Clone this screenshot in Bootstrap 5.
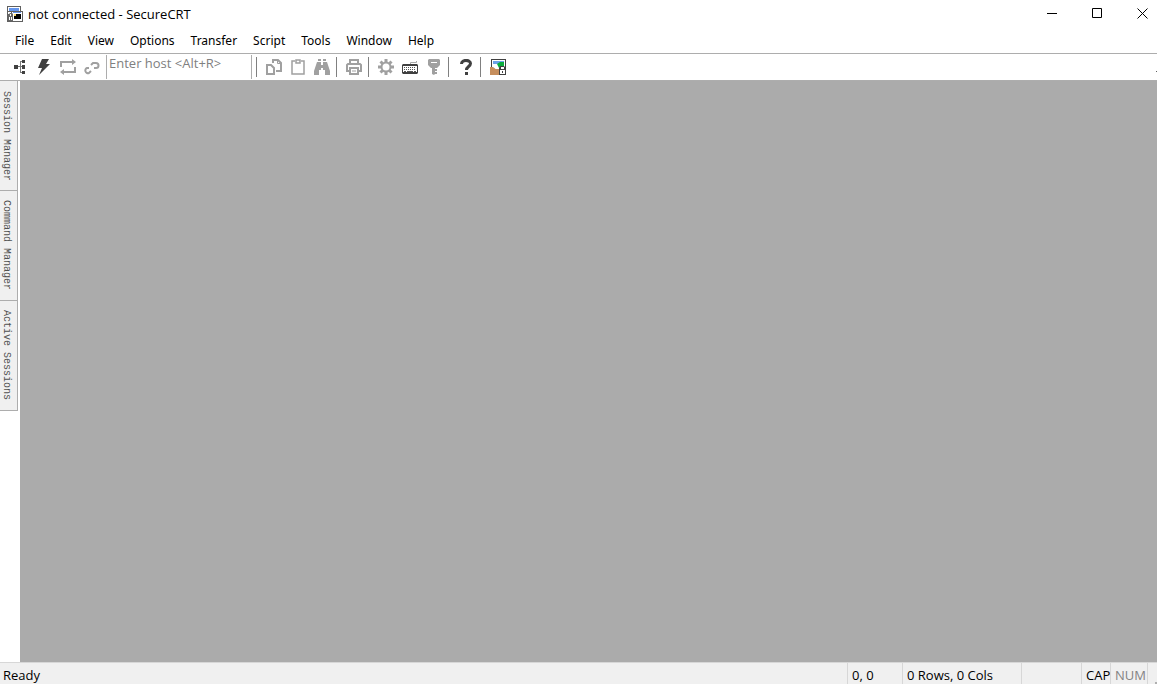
<!DOCTYPE html>
<html lang="en">
<head>
<meta charset="utf-8">
<meta name="viewport" content="width=device-width, initial-scale=1">
<title>not connected - SecureCRT</title>
<link href="https://cdn.jsdelivr.net/npm/bootstrap@5.3.0/dist/css/bootstrap.min.css" rel="stylesheet">
<style>
  body { font: 13px/20px "Open Sans", sans-serif; color: #000; background: #fff; }
  svg { display: block; }
  button { border: 0; background: transparent; color: inherit; padding: 0; }
  .titlebar { height: 27px; padding-left: 7px; gap: 5px; }
  .caption-group { margin-right: -8px; }
  .caption-btn { width: 45px; height: 27px; display: flex; align-items: center; justify-content: center; }
  .menubar { height: 27px; gap: 16px; padding: 2px 0 0 15px; border-bottom: 1px solid #adadad; font-family: "Noto Sans", sans-serif; font-size: 12px; }
  .menubar a { color: #000; text-decoration: none; }
  .toolbar { height: 27px; padding-left: 8px; border-bottom: 1px solid #adadad; }
  .tool { width: 24px; height: 26px; padding: 0 4px; color: #a0a0a0; }
  .tool.active-tool { color: #404040; }
  .divider { width: 8px; height: 20px; padding-left: 2px; }
  .divider::before { content: ""; display: block; width: 1px; height: 20px; background: #808080; }
  .host { width: 146px; height: 24px; margin: 0 2px; padding: 0 2px 8px; border: solid #adadad; border-width: 0 1px; border-radius: 0; line-height: 16px; outline: 0; }
  .host::placeholder { color: #808080; opacity: 1; }
  .toolbar-end { width: 1px; height: 1px; margin: 8px 0 0 auto; background: #606060; }
  .side { width: 20px; }
  .side-tab { width: 18px; height: 110px; padding: 0 5px 0 0; background: #f0f0f0; border: solid #adadad; border-width: 0 1px 1px 0; color: #505050; font: 10px/12px "Liberation Mono", monospace; writing-mode: vertical-rl; display: flex; align-items: center; justify-content: center; white-space: nowrap; }
  .side-tab:first-child { padding-top: 1px; }
  .workspace { background: #ababab; }
  .statusbar { height: 22px; background: #f0f0f0; border-top: 1px solid #d7d7d7; white-space: nowrap; }
  .ready { padding: 2px 0 0 3px; }
  .pane { height: 21px; padding: 2px 0 0 4px; border-left: 1px solid #d7d7d7; }
  .pane-pos { width: 55px; } .pane-size { width: 119px; } .pane-blank { width: 60px; } .pane-cap { width: 29px; } .pane-num { width: 37px; color: #838383; }
  .pane-grip { width: 10px; padding: 0; display: flex; align-items: flex-end; justify-content: flex-end; }
  .pane-grip::after { content: ""; width: 2px; height: 2px; background: #b0b0b0; }
</style>
</head>
<body class="vh-100 d-flex flex-column overflow-hidden">
<header>
  <div class="titlebar d-flex align-items-center">
    <svg width="16" height="18" viewBox="0 0 16 18" aria-hidden="true"><path fill="#606060" d="M0 1h14v5h2v11H5v0H0z"/><path fill="#fff" d="M1 2h12v4H1z"/><path fill="#6495ed" d="M2 3h10v3H2z"/><path fill="#fff" d="M5 7h10v9H5zM1 7h3v3H1z"/><path fill="#6495ed" d="M6 7h8v1H6z"/><path fill="#000" d="M7 9h7v5H7z"/><path fill="#f5d76e" d="M7 9h2v2H7z"/><path fill="#666" d="M1 9h1l1-1h2l1 1v7H1z"/><path fill="#fff" d="M3 9h1v2H3zM2 12h1v3H2zM4 12h1v3H4z"/></svg>
    <span class="flex-grow-1">not connected - SecureCRT</span>
    <div class="caption-group d-flex">
      <button class="caption-btn" aria-label="Minimize"><svg width="11" height="11"><path d="M0 5h10v1H0z"/></svg></button>
      <button class="caption-btn" aria-label="Maximize"><svg width="11" height="11"><path fill="none" stroke="#000" d="M.5.5h9v9h-9z"/></svg></button>
      <button class="caption-btn" aria-label="Close"><svg width="11" height="11"><path stroke="#000" d="m.5.5 10 10m0-10-10 10"/></svg></button>
    </div>
  </div>
  <nav class="menubar d-flex align-items-center" aria-label="Menu">
    <a href="#">File</a><a href="#">Edit</a><a href="#">View</a><a href="#">Options</a><a href="#">Transfer</a><a href="#">Script</a><a href="#">Tools</a><a href="#">Window</a><a href="#">Help</a>
  </nav>
  <div class="toolbar d-flex align-items-center" role="toolbar" aria-label="Main toolbar">
    <button class="tool active-tool" aria-label="Connect"><svg width="16" height="16" viewBox="0 0 16 16" fill="currentColor"><path d="M2 6h4v4H2zM10 1h3v3h-3zM10 6h3v4h-3zM10 12h3v3h-3z"/><path opacity=".7" d="M6 7h4v1H6zM8 2h2v1H8zM8 13h2v1H8zM8 3h1v10H8z"/></svg></button>
    <button class="tool active-tool" aria-label="Quick connect"><svg width="16" height="16" viewBox="0 0 16 16" fill="currentColor"><path d="M6 0h7l-3 5h4L3 16l3-7H2z"/></svg></button>
    <button class="tool" aria-label="Reconnect"><svg width="16" height="16" viewBox="0 0 16 16" fill="none" stroke="currentColor" stroke-width="2"><path d="M1 8V3h11M15 8v5H4"/><path fill="currentColor" stroke="none" d="m12 0 4 3-4 3zM4 10l-4 3 4 3z"/></svg></button>
    <button class="tool" aria-label="Disconnect"><svg width="16" height="16" viewBox="0 0 16 16" fill="none" stroke="currentColor" stroke-width="2"><path d="M5 9H3a2.500 2.500 0 1 0 2 5l2-2M7 6l2-2h3a2.500 2.500 0 1 1 0 5h-2"/></svg></button>
    <input class="host" type="text" aria-label="Host" placeholder="Enter host &lt;Alt+R&gt;">
    <span class="divider"></span>
    <button class="tool" aria-label="Copy"><svg width="16" height="16" viewBox="0 0 16 16" fill="none" stroke="currentColor" stroke-width="2"><path d="M1 6h4l3 3v6H1zM7 4V1h5l3 3v8h-5"/><path stroke-width="1" d="M11.500 1v3.500H15"/></svg></button>
    <button class="tool" aria-label="Paste"><svg width="16" height="16" viewBox="0 0 16 16" fill="none" stroke="currentColor" stroke-width="1.500"><path d="M5 2H2v13h12V2h-3M6 1h4v3H6z"/></svg></button>
    <button class="tool" aria-label="Find"><svg width="16" height="16" viewBox="0 0 16 16" fill="currentColor"><path d="M4 0h3v2H4zM9 0h3v2H9zM3 3h4v3h2V3h4l3 9v4h-5v-5H9V9H7v2H5v5H0v-4z"/></svg></button>
    <span class="divider"></span>
    <button class="tool" aria-label="Print"><svg width="16" height="16" viewBox="0 0 16 16" fill="none" stroke="currentColor" stroke-width="2"><path d="M4 5V1h8v4M4 12H1V6l1-1h12l1 1v6h-3M4 9h8v6H4z"/><path stroke-width="1" d="M6 12h4"/></svg></button>
    <span class="divider"></span>
    <button class="tool" aria-label="Session options"><svg width="16" height="16" viewBox="0 0 16 16" fill="none" stroke="currentColor" stroke-width="2"><circle cx="8" cy="8" r="4.500"/><path stroke-width="3" d="M8 0v3M8 13v3M0 8h3M13 8h3M2.500 2.500l2 2M11.500 11.500l2 2M2.500 13.500l2-2M11.500 4.500l2-2"/></svg></button>
    <button class="tool active-tool" aria-label="Keymap editor"><svg width="16" height="16" viewBox="0 0 16 16"><path fill="none" stroke="#aaa" d="M8.500 5V3.500h6V2"/><path fill="#404040" d="M1 5h14l1 1v8l-1 1H1l-1-1V6z"/><path fill="#fff" d="M1 7h14v6H1z"/><path stroke="#555" stroke-dasharray="1 1" d="M2 8.500h12M2 10.500h12"/><path stroke="#555" d="M2 12.500h2M5 12.500h6M12 12.500h2"/></svg></button>
    <button class="tool" aria-label="Key generator"><svg width="16" height="16" viewBox="0 0 16 16" fill="currentColor"><path fill-rule="evenodd" d="M3 0h10l1 1v5l-3 3H9v1h2v2H9v1h2v2H9l-1 1-2-1V9H5L2 6V1zM5 3v1h6V3z"/></svg></button>
    <span class="divider"></span>
    <button class="tool active-tool" aria-label="Help"><svg width="16" height="16" viewBox="0 0 16 16" fill="none" stroke="currentColor" stroke-width="3"><path d="M3.500 5c0-5 9-4.500 9-.5 0 3-4 3-4 6.500M8.500 13v3"/></svg></button>
    <span class="divider"></span>
    <button class="tool" aria-label="Session window"><svg width="16" height="16" viewBox="0 0 16 16"><path fill="#404040" d="M1 0h15v13H1z"/><path fill="#fff" d="M2 1h13v11H2z"/><path fill="#6ea2e8" d="M3 2h11v7H3z"/><path fill="#c68e5c" d="M0 8h3l3 2h4v6H0z"/><path fill="#fff" d="M3 5h6v5H6L3 8z"/><path fill="#0aad3c" d="m7 5 3-2h4v4h-3L9 9z"/><path fill="#404040" d="M9 9l1-2h4l2 2v7H9z"/><path fill="#fff" d="M11 8h3v2h-3zM10 11h5v4h-5z"/><path fill="#404040" d="M12 12h1v2h-1z"/></svg></button>
    <span class="toolbar-end"></span>
  </div>
</header>
<main class="d-flex flex-grow-1">
  <div class="side flex-shrink-0">
    <button class="side-tab">Session Manager</button>
    <button class="side-tab">Command Manager</button>
    <button class="side-tab">Active Sessions</button>
  </div>
  <div class="workspace flex-grow-1"></div>
</main>
<footer class="statusbar d-flex flex-shrink-0">
  <div class="ready flex-grow-1">Ready</div>
  <div class="pane pane-pos">0, 0</div>
  <div class="pane pane-size">0 Rows, 0 Cols</div>
  <div class="pane pane-blank"></div>
  <div class="pane pane-cap">CAP</div>
  <div class="pane pane-num">NUM</div>
  <div class="pane pane-grip"></div>
</footer>
<script src="https://cdn.jsdelivr.net/npm/bootstrap@5.3.0/dist/js/bootstrap.bundle.min.js"></script>
</body>
</html>
